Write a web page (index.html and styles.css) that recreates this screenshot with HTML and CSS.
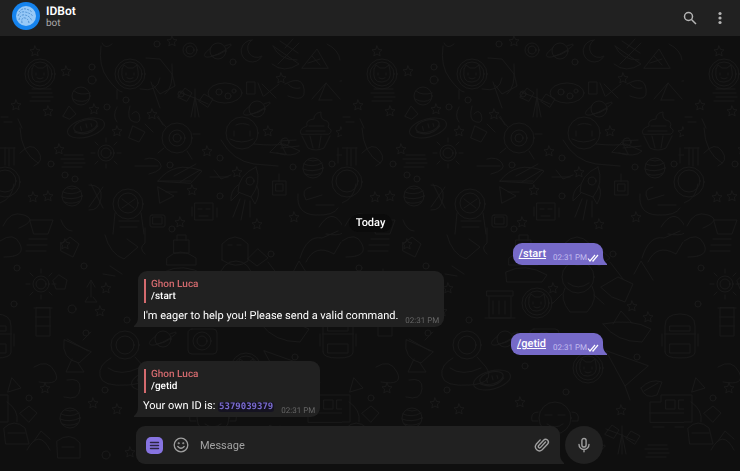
FILE: index.html
```
<!DOCTYPE html>
<html lang="en">
<head>
  <meta charset="UTF-8">
  <meta name="viewport" content="width=device-width, initial-scale=1.0">
  <title>IDBot</title>
  <link rel="stylesheet" href="styles.css">
</head>
<body>

  <!-- Space doodles behind the chat -->
  <svg class="wallpaper" aria-hidden="true">
    <defs>
      <path id="star" d="M0-5 L1.5-1.6 5-1.2 2.4 1.2 3.1 4.8 0 3 -3.1 4.8 -2.4 1.2 -5-1.2 -1.5-1.6Z"/>
      <g id="planet"><circle r="10"/><path d="M-9-4Q0 0 9-5M-10 1Q0 5 10 0M-8 6Q1 9 8 5M-5-8Q0-6 5-8"/></g>
      <g id="saturn"><circle r="8"/><path d="M-7-3C-20 6-12 9 0 3S19-10 7-5M-6 5Q2 4 7 0"/></g>
      <g id="face"><circle r="15"/><circle r="12"/><path d="M-8-5L-6-9-2-6H3L7-9 8-3Q10 7 0 8T-8-5M-4-1v2M4-1v2M-3 4Q0 6 3 4"/></g>
      <g id="sun"><circle r="8"/><circle r="5"/><path d="M0-11v-4M0 11v4M-11 0h-4M11 0h4M-8-8l-3-3M8 8l3 3M8-8l3-3M-8 8l-3 3"/></g>
      <g id="rocket"><path d="M10-22Q16-6 5 8L-8 3Q-8-14 10-22M-8-4Q-16 2-15 12L-7 4M11-3Q15 5 9 15L5 8M-6 10l-7 18M-1 11l-4 20M4 12l0 16"/><circle cx="4" cy="-8" r="4"/></g>
      <g id="saucer" transform="rotate(-15)"><ellipse rx="19" ry="9"/><ellipse cy="-2" rx="12" ry="6"/><path d="M-12 1Q0 10 12 1M-5-3v4M1-4v4M6-3v3"/></g>
      <g id="satellite"><path d="M0-12v28M-4 16L0-4 4 16M-16-9L-3-4 13 3M-17-4l7-9 7 5-5 8zM4 0l5-7 9 5-5 8z"/></g>
      <g id="robot"><path d="M-15 12V-14Q-15-26 0-26T15-14V12Q15 18 0 18T-15 12M-15-6H15M-10-14H10V-9H-10zM-10 4H10V13H-10zM-18-6V6M18-6V6"/></g>
      <g id="stripes"><path d="M-9-6H10M-12-2H11M-9 2H12M-11 6H9"/></g>
      <g id="cake"><path d="M-15 2Q-18-3-9-6-11-12-2-13-2-19 5-20 4-14 8-12 15-10 12-5 18-1 13 2ZM-14 4L-8 16Q0 20 8 16L14 4M-7-6H8M-10-1H9M-6 4l3 12M5 4l-2 12"/></g>
    </defs>
    <pattern id="space" x="0" y="36" width="342" height="440" patternUnits="userSpaceOnUse">
      <g fill="none" stroke="#191919" stroke-width="1" stroke-linejoin="round" stroke-linecap="round">
        <use href="#face" x="40" y="38"/>
        <use href="#face" x="130" y="38"/>
        <path d="M101 10Q98 30 108 43T122 56M117 54v9M140 53Q158 57 160 42M146 22L160 23 172 38 175 50 160 58 153 49M112 8Q105 14 102 7M165 58Q174 52 172 28"/>
        <circle cx="190" cy="14" r="7"/><circle cx="190" cy="14" r="4"/>
        <use href="#saturn" x="218" y="15"/>
        <path d="M252 4A11 11 0 1 0 262 20A9 9 0 0 1 252 4"/>
        <path d="M273 10Q279 24 297 24M272 28Q284 38 299 28L273 10M280 5l18 12M285 12l8-9M278 28L299 7"/>
        <path d="M302 32L317 13 328 32ZM308 27L320 23M312 20l8 9M327 8Q339 14 340 24"/>
        <use href="#stripes" x="41" y="59"/>
        <circle cx="81" cy="60" r="9"/><path d="M74 55Q80 60 90 57M73 63Q82 68 89 63M63 80l6-10 7 8-6 5z"/>
        <use href="#satellite" x="195" y="65"/>
        <ellipse cx="225" cy="57" rx="17" ry="10"/><circle cx="219" cy="56" r="3"/><circle cx="228" cy="60" r="3"/><circle cx="234" cy="55" r="2"/>
        <path d="M247 46h8v12h-8zM262 48l14 14M264 60l15-12M258 47l5 13"/>
        <use href="#saturn" x="257" y="73"/>
        <path d="M285 48Q302 39 304 53T288 60M288 48Q293 54 300 52M312 63L326 47 340 63M319 64h13M319 64l7-17M340 45Q353 41 353 58"/>
        <path d="M117 71Q112 80 117 86M130 70q-4 14 4 16t5-8q-3-5-7 0M151 46L160 72M157 81L166 91M18 83L22 92M1 81h7M4 86h8"/>
        <use href="#saucer" x="86" y="92"/>
        <use href="#sun" x="106" y="117"/>
        <circle cx="177" cy="102" r="15"/><circle cx="177" cy="102" r="8"/><circle cx="177" cy="102" r="4"/><path d="M163 89L158 80M187 115l5 8M164 112l-6 5M193 98h7"/>
        <circle cx="242" cy="97" r="16"/><path d="M230 103Q242 109 253 103M234 95v5M250 95v5M236 89Q242 86 249 89M221 104Q233 125 254 128L278 130M254 108Q274 110 284 108L300 115Q293 122 277 117M280 105l16-1M281 112L299 110"/>
        <use href="#cake" x="316" y="96"/>
        <path d="M20 92Q21 117 38 127M20 117Q31 105 38 115T34 130M5 112v17M9 113v17M14 112v17M0 112H15"/>
        <use href="#stripes" x="73" y="125"/>
        <path d="M135 130H158M145 123Q155 120 160 127T149 138M158 145Q174 124 202 135L191 147ZM158 145H191M174 140L196 128M180 146L200 134M133 90l12 6-6 10-10-4zM145 88l8 8"/>
        <path d="M214 134l7 9 10-4M210 141h18M270 116l10-10 6 12zM338 112v15M344 112v14M337 119h11"/>
        <use href="#planet" x="313" y="132"/>
        <circle cx="5" cy="146" r="15"/><circle cx="5" cy="145" r="11"/><circle cx="347" cy="146" r="15"/><circle cx="347" cy="145" r="11"/>
        <path d="M298 158Q296 178 315 179T338 172M311 151Q300 153 306 164L322 159M316 169H334M0 167Q12 163 14 148"/>
        <use href="#rocket" x="246" y="153"/>
        <use href="#planet" x="72" y="160"/>
        <path d="M89 149q14 0 12 13t-12 12M91 148L103 172M89 171L103 151M158 151l16 9-14 7zM166 156h11"/>
        <circle cx="128" cy="168" r="15"/><circle cx="128" cy="167" r="10"/><path d="M122 163L134 172M122 172L135 163M115 177L113 198M141 177L144 198M119 185H139M120 191H137"/>
        <rect x="150" y="179" width="15" height="12" rx="2"/><rect x="153" y="181" width="9" height="7"/>
        <path d="M195 167H213V184H195ZM192 171v9M217 172v9M198 173h4M206 173h4M199 180h9M273 145h13v14h-13zM276 148h7v7h-7zM279 145v-7"/>
        <path d="M3 190Q10 174 24 179T19 192M30 184H53L48 198H34ZM61 184Q65 195 72 195M319 191Q331 172 341 187T326 198"/>
        <path d="M0 205Q14 195 20 208T4 221M29 203h18M27 209h20M26 215h20M61 208l9-7 9 7-6 13-12-6zM105 199Q110 218 124 223L138 211 127 203M145 192V207Q138 212 145 218"/>
        <path d="M174 204h15v13h-15zM177 204v-5h9v5M167 222Q180 210 196 222V229H167ZM222 224V208Q235 194 248 208V225Q236 234 222 224M228 209h4M237 209h4"/>
        <path d="M300 222Q307 199 322 202L338 195M306 226Q315 207 334 218L341 206M258 213l10 9-11 8-9-7z"/>
        <use href="#sun" x="41" y="248"/>
        <use href="#robot" x="338" y="304"/><use href="#robot" x="-4" y="304"/>
        <path d="M36 272V300H50V272ZM34 272H52M36 281H50M36 290H50M64 304Q61 323 79 327L91 316ZM67 303L88 315M72 323L66 336H84L78 327M83 304l8-8"/>
        <path d="M91 245v16M87 251l4-7 4 7M88 261l-3 5h12l-4-5M59 239l8 5-2 9-9 0-3-8zM110 230l12 8M103 238l12 2"/>
        <circle cx="125" cy="309" r="14"/><circle cx="125" cy="309" r="9"/><path d="M111 322Q98 329 100 340T128 349 144 331L135 321M108 332Q120 341 139 332"/>
        <use href="#saturn" x="163" y="303"/>
        <rect x="188" y="293" width="29" height="25" rx="4"/><circle cx="202" cy="305" r="9"/><circle cx="202" cy="305" r="5"/>
        <path d="M145 255H171V260H145ZM147 261V282H169V261M151 265V278M157 265V278M163 265V278M143 282H173M164 236Q183 226 205 239L200 246H165Z"/>
        <use href="#face" x="195" y="267"/>
        <circle cx="236" cy="241" r="16"/><path d="M226 247Q236 255 247 247M223 252Q217 263 228 276H245Q257 263 250 250M220 258l-9 9M252 259l10 9"/>
        <path d="M259 251L276 241 291 248 283 266 270 261ZM268 226L281 243M292 238L299 225 311 244M261 288Q274 306 300 306L309 293Q290 282 261 288M271 288l8-13 11 12"/>
        <use href="#face" x="246" y="332"/>
        <path d="M264 315L283 350 306 330ZM283 350L288 364M299 352Q308 342 320 346L315 359Q303 364 299 352M302 355L316 347"/>
        <path d="M308 386V366H319V359H350V386ZM324 364h9v9h-9zM337 364h9v9h-9zM308 377H350M311 391h11M333 391h12M0 359H8V386H0"/>
        <use href="#saucer" x="150" y="344"/>
        <path d="M34 331Q48 322 55 336T39 346M12 342l9 10-13 4zM67 344Q81 341 80 353T64 361M20 377l9-7 8 7-8 9zM7 366Q19 374 17 386"/>
        <use href="#planet" x="70" y="382"/>
        <circle cx="213" cy="382" r="16"/><path d="M205 388Q213 394 221 388M203 379h7M216 379h7M196 376q-8 0-6 9h6M230 376q8 0 6 9h-6"/>
        <path d="M4 392Q14 382 25 392L29 408H6ZM8 397H25M27 414Q39 392 50 414M34 405l7-10 9 8M57 405Q70 395 80 407V422H58ZM62 411h12"/>
        <use href="#satellite" x="280" y="402"/><use href="#stripes" x="315" y="415"/><use href="#saturn" x="250" y="416"/>
        <use href="#star" x="35" y="15"/><use href="#star" x="66" y="35"/><use href="#star" x="16" y="69"/><use href="#star" x="48" y="75"/>
        <use href="#star" x="117" y="95"/><use href="#star" x="152" y="78"/><use href="#star" x="94" y="73"/><use href="#star" x="172" y="5"/>
        <use href="#star" x="268" y="95"/><use href="#star" x="341" y="96"/><use href="#star" x="281" y="42"/><use href="#star" x="59" y="113"/>
        <use href="#star" x="237" y="136"/><use href="#star" x="192" y="154"/><use href="#star" x="48" y="160"/><use href="#star" x="33" y="161"/>
        <use href="#star" x="294" y="181"/><use href="#star" x="65" y="208"/><use href="#star" x="207" y="115"/><use href="#star" x="100" y="275"/>
        <use href="#star" x="106" y="252"/><use href="#star" x="211" y="252"/><use href="#star" x="45" y="352"/><use href="#star" x="93" y="367"/>
        <use href="#star" x="306" y="281"/><use href="#star" x="279" y="374"/><use href="#star" x="178" y="366"/><use href="#star" x="290" y="270"/>
        <use href="#star" x="117" y="373"/><use href="#star" x="180" y="186"/><use href="#star" x="257" y="188"/><use href="#star" x="130" y="416"/>
        <circle cx="92" cy="31" r="3"/><circle cx="92" cy="44" r="4"/><circle cx="157" cy="8" r="3"/><circle cx="233" cy="26" r="3"/><circle cx="181" cy="58" r="3"/>
        <circle cx="107" cy="71" r="3"/><circle cx="126" cy="64" r="3"/><circle cx="51" cy="128" r="3"/><circle cx="65" cy="139" r="3"/><circle cx="75" cy="143" r="3"/>
        <circle cx="220" cy="122" r="3"/><circle cx="293" cy="131" r="3"/><circle cx="332" cy="128" r="3"/><circle cx="220" cy="160" r="3"/><circle cx="172" cy="193" r="3"/>
        <circle cx="285" cy="106" r="4"/><circle cx="170" cy="129" r="3"/><circle cx="84" cy="230" r="3"/><circle cx="17" cy="232" r="3"/><circle cx="14" cy="268" r="3"/>
        <circle cx="72" cy="273" r="4"/><circle cx="86" cy="297" r="3"/><circle cx="295" cy="321" r="3"/><circle cx="271" cy="218" r="3"/><circle cx="127" cy="284" r="3"/>
        <circle cx="183" cy="330" r="3"/><circle cx="29" cy="362" r="3"/><circle cx="105" cy="354" r="3"/><circle cx="224" cy="356" r="3"/><circle cx="106" cy="419" r="4"/>
      </g>
    </pattern>
    <rect width="100%" height="100%" fill="url(#space)"/>
  </svg>

  <header class="topbar">
    <svg class="avatar" viewBox="0 0 28 28" aria-hidden="true">
      <circle cx="14" cy="14" r="14" fill="#1583ee"/>
      <circle cx="14" cy="14" r="10" fill="#96c8f7"/>
      <g fill="none" stroke="#4f91d3" stroke-width="1" stroke-dasharray="2 1">
        <path d="M7 10q3-4 7-3t6 3M6 14q2-5 7-4t8 4M7 18q1-6 6-5t7 6M10 21q-1-6 3-5t4 6"/>
      </g>
    </svg>
    <div class="peer">
      <h1>IDBot</h1>
      <p>bot</p>
    </div>
    <button class="icon-btn" aria-label="Search">
      <svg width="14" height="14" viewBox="0 0 14 14" fill="none" stroke="#b4b4b4" stroke-width="1.5">
        <circle cx="5.5" cy="5.5" r="4"/><path d="M8.5 8.5L13 13"/>
      </svg>
    </button>
    <button class="icon-btn" aria-label="More actions">
      <svg width="14" height="14" viewBox="0 0 14 14" fill="#b4b4b4">
        <circle cx="7" cy="2.5" r="1.6"/><circle cx="7" cy="7" r="1.6"/><circle cx="7" cy="11.5" r="1.6"/>
      </svg>
    </button>
  </header>

  <main class="chat">
    <div class="date">Today</div>

    <div class="bubble out">
      <a href="#">/start</a>
      <span class="time">02:31 PM<svg width="12" height="8" viewBox="0 0 12 8" fill="none" stroke="#fff" stroke-width="1.2"><path d="M1 4.5L3 7 8 1M5.5 6.5L6 7 11 1"/></svg></span>
    </div>

    <div class="bubble in">
      <blockquote>
        <cite>Ghon Luca</cite>
        <p>/start</p>
      </blockquote>
      <div class="line">
        <p>I'm eager to help you! Please send a valid command.</p>
        <span class="time">02:31 PM</span>
      </div>
    </div>

    <div class="bubble out">
      <a href="#">/getid</a>
      <span class="time">02:31 PM<svg width="12" height="8" viewBox="0 0 12 8" fill="none" stroke="#fff" stroke-width="1.2"><path d="M1 4.5L3 7 8 1M5.5 6.5L6 7 11 1"/></svg></span>
    </div>

    <div class="bubble in">
      <blockquote>
        <cite>Ghon Luca</cite>
        <p>/getid</p>
      </blockquote>
      <div class="line">
        <p>Your own ID is: <code>5379039379</code></p>
        <span class="time">02:31 PM</span>
      </div>
    </div>
  </main>

  <form class="composer">
    <div class="field">
      <button type="button" class="menu-btn" aria-label="Bot menu">
        <svg width="17" height="17" viewBox="0 0 17 17" stroke="#2b2540" stroke-width="1.4" stroke-linecap="round">
          <path d="M4.500 5.500H12.500M4.500 8.500H12.500M4.500 11.500H12.500"/>
        </svg>
      </button>
      <button type="button" class="icon-btn" aria-label="Emoji">
        <svg width="16" height="16" viewBox="0 0 16 16" fill="none" stroke="#a0a0a0" stroke-width="1.3" stroke-linecap="round">
          <circle cx="8" cy="8" r="6.8"/><path d="M4.800 9.500Q8 13 11.200 9.500"/>
          <circle cx="5.700" cy="6.200" r=".4"/><circle cx="10.300" cy="6.200" r=".4"/>
        </svg>
      </button>
      <input type="text" placeholder="Message" aria-label="Message">
      <button type="button" class="icon-btn" aria-label="Attach file">
        <svg width="16" height="16" viewBox="0 0 16 16" fill="none" stroke="#a0a0a0" stroke-width="1.4" stroke-linecap="round">
          <path d="M11.5 5L6.6 10.4A1.3 1.3 0 0 1 4.700 8.600L9.600 3.200A2.700 2.700 0 0 1 13.600 6.900L8.200 12.800A4.100 4.100 0 0 1 2.200 7.300L6.200 2.900"/>
        </svg>
      </button>
    </div>
    <button type="button" class="mic" aria-label="Record voice message">
      <svg width="16" height="16" viewBox="0 0 16 16" fill="none" stroke="#a0a0a0" stroke-width="1.4" stroke-linecap="round">
        <rect x="5.900" y="1.500" width="4.200" height="8.500" rx="2.100"/><path d="M3 7.500A5 5 0 0 0 13 7.500M8 12.500V14.800"/>
      </svg>
    </button>
  </form>

</body>
</html>
```
FILE: styles.css
```
* {
  box-sizing: border-box;
}

body {
  font-family: Roboto, sans-serif;
  font-size: 11px;
  line-height: 14px;
  text-rendering: geometricPrecision;
  color: #fff;
  background: #0f0f0f;
  margin: 0;
  min-height: 100vh;
  display: flex;
  flex-direction: column;
}

h1, p, blockquote {
  margin: 0;
}

button {
  display: flex;
  align-items: center;
  justify-content: center;
  padding: 0;
  border: none;
  background: none;
  cursor: pointer;
}

.wallpaper {
  position: fixed;
  inset: 0;
  width: 100%;
  height: 100%;
  z-index: -1;
}

/* Top bar */
.topbar {
  display: flex;
  align-items: center;
  gap: 6px;
  height: 36px;
  padding: 0 12px;
  background: #212121;
}

.avatar {
  width: 28px;
  height: 28px;
  margin-top: -4px;
}

.peer {
  flex: 1;
  padding-bottom: 2px;
}

.peer h1 {
  font-size: 12px;
  line-height: 14px;
  font-weight: 600;
}

.peer p {
  font-size: 10px;
  line-height: 12px;
  color: #aaa;
}

.icon-btn {
  width: 16px;
  height: 16px;
}

.topbar .icon-btn + .icon-btn {
  margin-left: 8px;
}

/* Messages */
.chat {
  flex: 1;
  display: flex;
  flex-direction: column;
  justify-content: flex-end;
  width: 100%;
  max-width: 468px;
  margin: 0 auto;
  padding: 0 1px 9px 2px;
}

.date {
  align-self: center;
  padding: 2px 7px;
  margin-bottom: 11px;
  border-radius: 9px;
  background: #0b0b0b;
  font-weight: 500;
}

.bubble {
  position: relative;
  border-radius: 9px;
}

.bubble + .bubble {
  margin-top: 6px;
}

.bubble::after {
  content: "";
  position: absolute;
  bottom: 0;
  width: 8px;
  height: 10px;
}

.in {
  align-self: flex-start;
  padding: 8px 5px 2px;
  background: #212121;
  border-bottom-left-radius: 0;
}

.in::after {
  left: -4px;
  background: #212121;
  clip-path: path("M4 0Q4 6 0 9V10H8V0Z");
}

.out {
  align-self: flex-end;
  display: flex;
  gap: 7px;
  height: 22px;
  padding: 4px 4px 2px 6px;
  background: #766ac8;
  border-bottom-right-radius: 0;
}

.out::after {
  right: -4px;
  background: #766ac8;
  clip-path: path("M4 0Q4 6 8 9V10H0V0Z");
}

.out a {
  color: #fff;
  font-weight: 500;
}

.time {
  align-self: flex-end;
  display: flex;
  align-items: center;
  font-size: 8px;
  line-height: 10px;
  color: #666;
}

.out .time {
  color: #c4bdf0;
}

blockquote {
  padding-left: 5px;
  border-left: 2px solid #d46a6e;
  margin-left: 1px;
  font-size: 10px;
  line-height: 12px;
  font-weight: 500;
}

cite {
  color: #d46a6e;
  font-style: normal;
}

.line {
  display: flex;
  gap: 7px;
  padding: 6px 0 2px;
}

.line .time {
  margin-bottom: -3px;
}

code {
  font-family: "DejaVu Sans Mono", monospace;
  font-size: 9px;
  line-height: 10px;
  font-weight: bold;
  color: #7a6bd0;
  background: #151321;
  border-radius: 3px;
  padding: 0 1px;
}

/* Message box */
.composer {
  display: flex;
  gap: 5px;
  width: 100%;
  max-width: 468px;
  margin: 0 auto;
  padding: 0 1px 7px 0;
}

.field {
  position: relative;
  flex: 1;
  display: flex;
  align-items: center;
  gap: 10px;
  height: 38px;
  padding: 0 10px;
  border-radius: 9px 9px 0 9px;
  background: #212121;
}

.field::after {
  content: "";
  position: absolute;
  right: -4px;
  bottom: 0;
  width: 8px;
  height: 10px;
  background: #212121;
  clip-path: path("M4 0Q4 6 8 9V10H0V0Z");
}

.menu-btn {
  width: 17px;
  height: 17px;
  border-radius: 5px;
  background: #8774e1;
}

.field input {
  flex: 1;
  min-width: 0;
  padding: 0 0 0 1px;
  border: none;
  outline: none;
  background: none;
  color: #fff;
  font-family: inherit;
  font-size: 11px;
}

.field input::placeholder {
  color: #a2a2a2;
}

.mic {
  width: 38px;
  height: 38px;
  border-radius: 50%;
  background: #212121;
}
```
